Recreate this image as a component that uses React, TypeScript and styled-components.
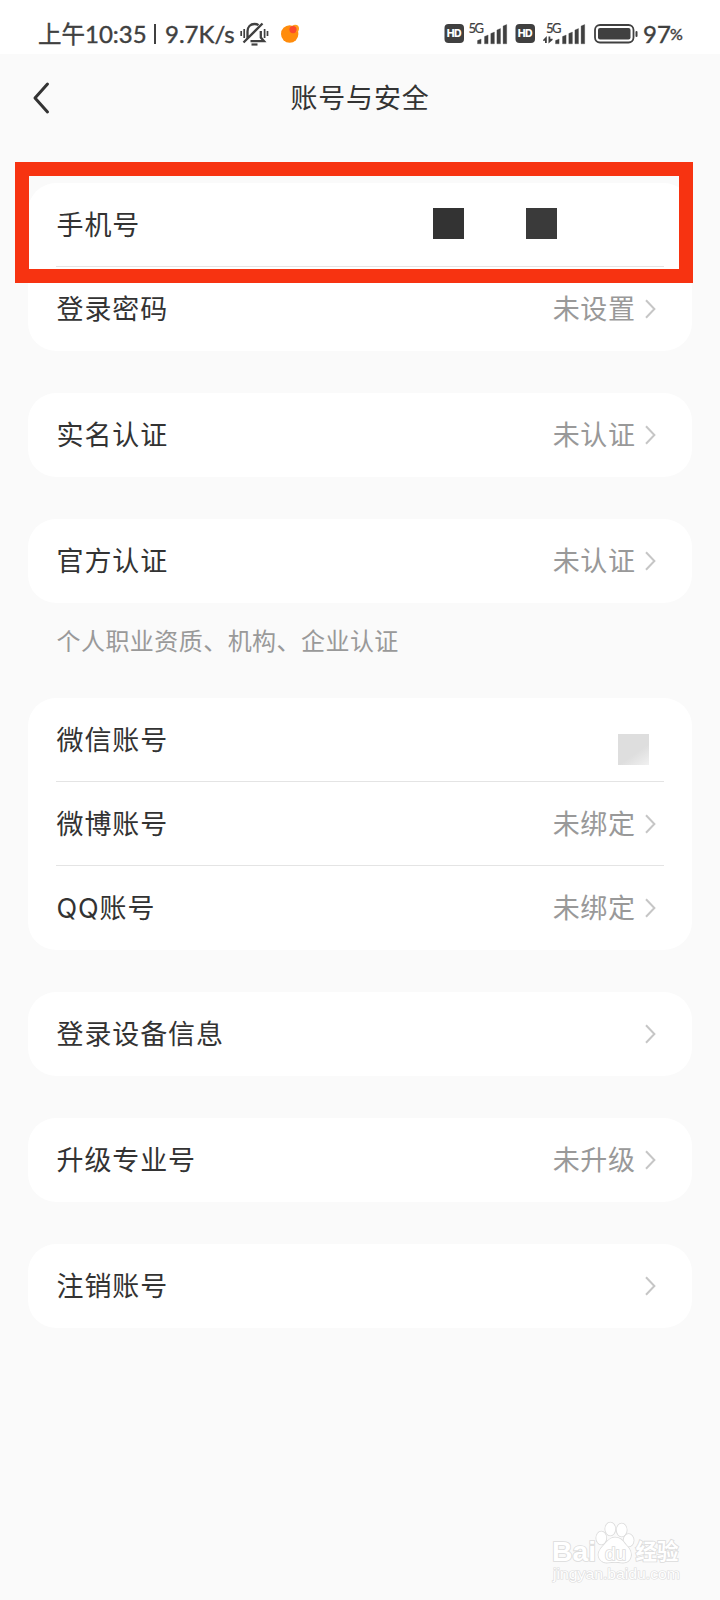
import React from "react";
import styled, { createGlobalStyle } from "styled-components";

const Global = createGlobalStyle`
  body { margin: 0; background: #fafafa; }
  * { box-sizing: border-box; }
`;

const cjk = `"Noto Sans CJK SC", sans-serif`;

const Screen = styled.div`
  position: relative;
  width: 720px;
  height: 1600px;
  overflow: hidden;
  background: #fafafa;
  color: #333;
  font-family: Inter, ${cjk};
`;

const StatusBar = styled.header`
  display: flex;
  align-items: center;
  justify-content: space-between;
  height: 54px;
  padding: 13px 37px 0 38px;
  background: #fff;
  color: #404040;
`;

const StatusGroup = styled.div`
  display: flex;
  align-items: center;
  height: 41px;
`;

const StatusText = styled.span<{ $size?: number; $width?: number; $cjk?: boolean; $gap?: number; $spacing?: number }>`
  display: block;
  flex: none;
  white-space: nowrap;
  line-height: 41px;
  font-family: ${(p) => (p.$cjk ? cjk : `Lato, ${cjk}`)};
  font-size: ${(p) => p.$size ?? 24}px;
  letter-spacing: ${(p) => p.$spacing ?? 0}px;
  -webkit-text-stroke: 0.4px currentColor;
  width: ${(p) => (p.$width ? `${p.$width}px` : "auto")};
  margin-left: ${(p) => p.$gap ?? 0}px;
`;

const StatusSeparator = styled.span`
  width: 2px;
  height: 20px;
  margin: 0 9px 0 9px;
  background: #404040;
`;

const Icon = styled.svg<{ $gap?: number }>`
  display: block;
  flex: none;
  overflow: visible;
  margin-left: ${(p) => p.$gap ?? 0}px;
`;

const NavBar = styled.nav`
  display: grid;
  grid-template-columns: 60px 1fr 60px;
  align-items: center;
  height: 88px;
  padding: 0 28px;
`;

const Title = styled.h1`
  margin: 0;
  padding-top: 2px;
  text-align: center;
  font-size: 27px;
  font-weight: 400;
  letter-spacing: 0.8px;
  line-height: 40px;
`;

const Content = styled.main`
  display: flex;
  flex-direction: column;
  gap: 42px;
  padding: 41px 28px 0;
`;

const Card = styled.section`
  border-radius: 28px;
  background: #fff;
`;

const Row = styled.div`
  display: flex;
  align-items: center;
  height: 84px;
  margin: 0 28px;
  padding-right: 8px;
  & + & { box-shadow: 0 -1px 0 #e4e4e4; }
`;

const Label = styled.span`
  flex: 1;
  padding: 2px 0 0 0.5px;
  font-size: 27px;
  letter-spacing: 0.9px;
  line-height: 40px;
`;

const Value = styled.span`
  margin-right: 9.5px;
  padding-top: 2px;
  color: #999;
  font-size: 27px;
  letter-spacing: 0.6px;
  line-height: 40px;
`;

const Note = styled.p`
  margin: 0 28px;
  height: 95px;
  padding: 21px 0 0 0.5px;
  color: #999;
  font-size: 24px;
  letter-spacing: 0.45px;
  line-height: 36px;
`;

const NotedGroup = styled.div`
  margin-bottom: -42px;
`;

const MaskPair = styled.div`
  display: flex;
  gap: 62px;
  margin: -3px 99px 0 0;
`;

const Mask = styled.i<{ $fill: string }>`
  width: 31px;
  height: 31px;
  background: ${(p) => p.$fill};
`;

const AvatarMask = styled(Mask)`
  margin: 18px 7px 0 0;
`;

const Highlight = styled.div`
  position: absolute;
  left: 15px;
  top: 162.4px;
  width: 678px;
  height: 121px;
  border: 14px solid #f73311;
`;

const Watermark = styled.div`
  position: absolute;
  left: 550px;
  top: 1518px;
  width: 132px;
  height: 68px;
`;

const Chevron = () => (
  <Icon width="11" height="20" viewBox="0 0 11 20" fill="none" stroke="#c6c6c6" strokeWidth="2">
    <path d="M1 1.2 9.4 10 1 18.8" />
  </Icon>
);

const HdBadge = ({ gap }: { gap?: number }) => (
  <Icon $gap={gap} width="20" height="19" viewBox="0 0 20 19">
    <rect x=".5" width="19.500" height="19" rx="4" fill="#404040" />
    <text x="10.200" y="13.200" textAnchor="middle" textLength="15" fill="#fff" fontFamily="Inter, sans-serif" fontWeight="800" fontSize="10.500">HD</text>
  </Icon>
);

const bars = [
  [0, 16, 4.8],
  [7, 12, 8.8],
  [13.3, 9, 11.8],
  [19.4, 5.5, 15.3],
  [25.6, 1.5, 19.3],
];

const Signal = ({ gap, data }: { gap?: number; data?: boolean }) => {
  const barX = data ? 12.5 : 9.5;
  const textX = data ? 3 : 0.5;
  return (
    <Icon $gap={gap} width={data ? 42 : 39} height="21" viewBox={`0 0 ${data ? 42 : 39} 21`} fill="#404040">
      <text x={textX} y="9.500" textLength="15.500" fontFamily="Lato, sans-serif" fontSize="13" stroke="#404040" strokeWidth=".2">5G</text>
      {bars.map(([x, y, h]) => (
        <path key={x} d={`M${barX + x} ${y + 1.5}l3.600-1.500v${h}h-3.600Z`} stroke="#404040" strokeWidth=".3" strokeLinejoin="round" />
      ))}
      {data && <path d="M0 17 3.800 13V20H2V17.800H0ZM5.500 13.500H7.300V15.700H9.600V17L5.500 20.500Z" />}
    </Icon>
  );
};

type Item = { label: string; value?: string; mask?: "phone" | "avatar" };

const SettingRow = ({ label, value, mask }: Item) => (
  <Row>
    <Label>{label}</Label>
    {mask === "phone" && (
      <MaskPair>
        <Mask $fill="#333" />
        <Mask $fill="#3a3a3a" />
      </MaskPair>
    )}
    {mask === "avatar" && <AvatarMask $fill="linear-gradient(145deg, #dedede 60%, #f1f1f1)" />}
    {value && <Value>{value}</Value>}
    {!mask && <Chevron />}
  </Row>
);

const Group = ({ items }: { items: Item[] }) => (
  <Card>
    {items.map((item) => (
      <SettingRow key={item.label} {...item} />
    ))}
  </Card>
);

export default function App() {
  return (
    <Screen>
      <Global />
      <StatusBar>
        <StatusGroup>
          <StatusText $cjk $size={23.5} $width={47}>上午</StatusText>
          <StatusText $width={60}>10:35</StatusText>
          <StatusSeparator />
          <StatusText $width={72}>9.7K/s</StatusText>
          <Icon $gap={3} width="28" height="24" viewBox="0 0 28 24" fill="none" stroke="#404040" strokeWidth="2.300">
            <path d="M7.500 16V9.500C7.500 4.800 10.500 2 14.500 2c1.600 0 3 .4 4 1.200M20.800 9v6.500l3.200 3.700H10.500M3.500 20.500 22.500 1.500" />
            <path d="M11.500 22.500h6" strokeWidth="2.200" />
            <path d="M1.200 9v5M4.200 7v9M24.600 7v9M27.500 9v5" strokeWidth="1.700" />
          </Icon>
          <Icon $gap={13} width="18" height="19" viewBox="0 0 18 19">
            <circle cx="8.700" cy="10" r="8.700" fill="#ff8c0c" />
            <circle cx="14.200" cy="4.500" r="3.800" fill="#ff9d1c" />
            <circle cx="12" cy="5.600" r="3.600" fill="#fb4a2c" />
          </Icon>
        </StatusGroup>
        <StatusGroup>
          <HdBadge />
          <Signal gap={4} />
          <HdBadge gap={8} />
          <Signal gap={8} data />
          <Icon $gap={9} width="44" height="20" viewBox="0 0 44 20" fill="none">
            <rect x="1" y="1" width="38.500" height="17.500" rx="5" stroke="#404040" strokeWidth="1.800" />
            <rect x="4" y="4" width="32.500" height="11.500" rx="2" fill="#404040" />
            <rect x="41.500" y="7" width="2" height="6" rx="1" fill="#404040" />
          </Icon>
          <StatusText $gap={5} $width={27}>97</StatusText>
          <StatusText $size={16} $width={13}>%</StatusText>
        </StatusGroup>
      </StatusBar>
      <NavBar>
        <Icon $gap={5} width="16" height="32" viewBox="0 0 16 32" fill="none" stroke="#333" strokeWidth="3" strokeLinecap="round" strokeLinejoin="round">
          <path d="M14.500 2 2 16l12.500 14" />
        </Icon>
        <Title>账号与安全</Title>
      </NavBar>
      <Content>
        <Group items={[{ label: "手机号", mask: "phone" }, { label: "登录密码", value: "未设置" }]} />
        <Group items={[{ label: "实名认证", value: "未认证" }]} />
        <NotedGroup>
          <Group items={[{ label: "官方认证", value: "未认证" }]} />
          <Note>个人职业资质、机构、企业认证</Note>
        </NotedGroup>
        <Group
          items={[
            { label: "微信账号", mask: "avatar" },
            { label: "微博账号", value: "未绑定" },
            { label: "QQ账号", value: "未绑定" },
          ]}
        />
        <Group items={[{ label: "登录设备信息" }]} />
        <Group items={[{ label: "升级专业号", value: "未升级" }]} />
        <Group items={[{ label: "注销账号" }]} />
      </Content>
      <Highlight />
      <Watermark>
        <Icon width="132" height="68" viewBox="0 0 132 68" fill="#fff" stroke="#dcdcdc" strokeWidth="1.700" paintOrder="stroke">
          <text x="2" y="43" textLength="44" lengthAdjust="spacingAndGlyphs" fontFamily="Liberation Sans, sans-serif" fontWeight="700" fontSize="27">Bai</text>
          <ellipse cx="51.300" cy="20" rx="5" ry="6.500" />
          <ellipse cx="60.300" cy="11" rx="5" ry="6.500" />
          <ellipse cx="71.700" cy="12" rx="5" ry="6.500" />
          <ellipse cx="78.600" cy="22.300" rx="5" ry="6.200" />
          <path d="M65 19.500c6 0 8 4 11 7.500 4 4 6 8 4.500 12.500s-5.500 5.500-9.500 5-4-.5-6-.5-4 0-7 .5-7.500-1-9-5 .5-8 4.500-12 6-8 11.500-8Z" />
          <text x="55" y="41.500" textLength="21" fontFamily="Liberation Sans, sans-serif" fontSize="19">du</text>
          <text x="85.500" y="41" textLength="43" fontFamily="Noto Sans CJK SC, sans-serif" fontWeight="700" fontSize="21.500">经验</text>
          <text x="3" y="60.500" textLength="127" lengthAdjust="spacingAndGlyphs" fontFamily="Liberation Sans, sans-serif" fontSize="14.500" strokeWidth="1.200">jingyan.baidu.com</text>
        </Icon>
      </Watermark>
    </Screen>
  );
}
